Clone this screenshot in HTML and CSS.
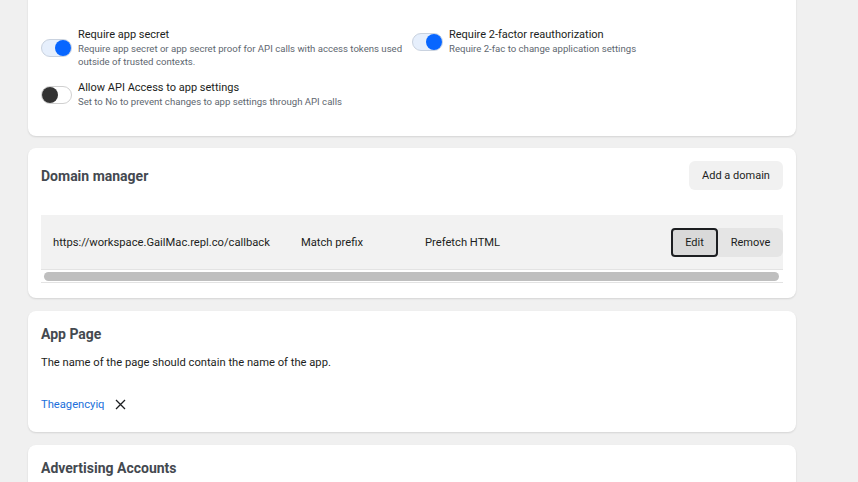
FILE: index.html
```html
<!DOCTYPE html>
<html>
<head>
<meta charset="utf-8">
<link rel="stylesheet" href="styles.css">
</head>
<body>
<div class="page">
  <section class="card card-first">
    <div class="toggle-grid">
      <div class="toggle-item">
        <span class="switch on"><span class="knob"></span></span>
        <div class="toggle-text">
          <div class="t-title">Require app secret</div>
          <div class="t-sub">Require app secret or app secret proof for API calls with access tokens used outside of trusted contexts.</div>
        </div>
      </div>
      <div class="toggle-item">
        <span class="switch on"><span class="knob"></span></span>
        <div class="toggle-text">
          <div class="t-title">Require 2-factor reauthorization</div>
          <div class="t-sub">Require 2-fac to change application settings</div>
        </div>
      </div>
      <div class="toggle-item">
        <span class="switch off"><span class="knob"></span></span>
        <div class="toggle-text">
          <div class="t-title">Allow API Access to app settings</div>
          <div class="t-sub">Set to No to prevent changes to app settings through API calls</div>
        </div>
      </div>
    </div>
  </section>

  <section class="card card-domain">
    <div class="card-header">
      <h2 class="card-title">Domain manager</h2>
      <button class="btn-light">Add a domain</button>
    </div>
    <div class="table">
      <div class="row">
        <div class="cell c-url">https://workspace.GailMac.repl.co/callback</div>
        <div class="cell c-match">Match prefix</div>
        <div class="cell c-pre">Prefetch HTML</div>
        <div class="actions">
          <button class="btn-edit">Edit</button>
          <button class="btn-remove">Remove</button>
        </div>
      </div>
      <div class="scroll"><div class="thumb"></div></div>
    </div>
  </section>

  <section class="card card-text">
    <h2 class="card-title">App Page</h2>
    <p class="desc">The name of the page should contain the name of the app.</p>
    <div class="page-tag">
      <a class="link">Theagencyiq</a>
      <svg class="x-icon" width="11" height="11" viewBox="0 0 11 11"><path d="M1 1 L10 10 M10 1 L1 10" stroke="#1c1e21" stroke-width="1.3" fill="none"/></svg>
    </div>
  </section>

  <section class="card card-text card-last">
    <h2 class="card-title">Advertising Accounts</h2>
    <div class="spacer"></div>
  </section>
</div>
</body>
</html>
```
FILE: styles.css
```css
* { box-sizing: border-box; }
html, body { margin: 0; padding: 0; }
body {
  background: #f0f0f0;
  font-family: Roboto, "Liberation Sans", Arial, sans-serif;
  color: #1c1e21;
  overflow: hidden;
  height: 482px;
}
.page {
  width: 768px;
  margin: -20px 0 0 28px;
  display: flex;
  flex-direction: column;
  gap: 12px;
}
.card {
  background: #fff;
  border-radius: 8px;
  box-shadow: 0 1px 2px rgba(0,0,0,0.12);
  padding: 13px 13px 14px 13px;
}
.card-first {
  padding-top: 48px;
  padding-bottom: 28px;
}
.card-domain { padding-bottom: 15px; margin-bottom: 1px; }
.card-text { padding-top: 14px; padding-bottom: 16px; }
.card-last { margin-top: 1px; }
.toggle-grid {
  display: grid;
  grid-template-columns: 371px 371px;
  row-gap: 13px;
  align-items: start;
}
.toggle-item {
  display: flex;
  align-items: center;
  gap: 6px;
}
.switch {
  flex: none;
  position: relative;
  width: 31px;
  height: 18px;
  border-radius: 9px;
  border: 1px solid #c9d2df;
  background: #e6effc;
}
.switch .knob {
  position: absolute;
  top: 0;
  width: 16px;
  height: 16px;
  border-radius: 50%;
}
.switch.on .knob { right: 0; background: #0866ff; }
.switch.off { background: #fff; border-color: #d0d0d0; }
.switch.off .knob { left: 0; background: #333; }
.t-title {
  font-size: 11px;
  line-height: 14px;
  color: #1c1e21;
}
.t-sub {
  font-size: 9.6px;
  line-height: 13px;
  color: #606770;
}
.card-header {
  display: flex;
  justify-content: space-between;
  align-items: center;
  height: 29px;
}
.card-title {
  margin: 0;
  font-size: 14px;
  line-height: 18px;
  font-weight: 700;
  color: #444950;
}
.btn-light {
  font-family: inherit;
  font-size: 11px;
  color: #1c1e21;
  background: #f1f1f1;
  border: none;
  border-radius: 6px;
  height: 29px;
  width: 94px;
  padding: 0;
}
.table { margin-top: 25px; }
.row {
  display: flex;
  align-items: center;
  height: 55px;
  background: #f2f2f2;
  border-bottom: 1px solid #e3e3e3;
  font-size: 11.2px;
  color: #1c1e21;
}
.cell { padding: 0 12px; white-space: nowrap; }
.c-url { width: 248px; }
.c-match { width: 124px; }
.c-pre { flex: 1; }
.actions { display: flex; height: 29px; }
.btn-edit {
  font-family: inherit;
  font-size: 11px;
  color: #1c1e21;
  width: 47px;
  height: 29px;
  background: #d9d9d9;
  border: 2px solid #1c1e21;
  border-radius: 4px;
  padding: 0;
}
.btn-remove {
  font-family: inherit;
  font-size: 11px;
  color: #1c1e21;
  width: 65px;
  height: 29px;
  background: #e5e5e5;
  border: none;
  border-radius: 0 6px 6px 0;
  padding: 0;
}
.scroll {
  height: 13px;
  padding: 2px 4px 2px 3px;
  border-bottom: 1px solid #e3e3e3;
}
.thumb {
  height: 9px;
  border-radius: 5px;
  background: #bfbfbf;
}
.desc {
  margin: 13px 0 0 0;
  font-size: 11.2px;
  line-height: 14px;
  color: #1c1e21;
}
.page-tag {
  margin-top: 22px;
  height: 24px;
  display: flex;
  align-items: center;
  gap: 11px;
}
.link {
  font-size: 11.2px;
  color: #216fdb;
}
.x-icon { display: block; }
.spacer { height: 40px; }
```
